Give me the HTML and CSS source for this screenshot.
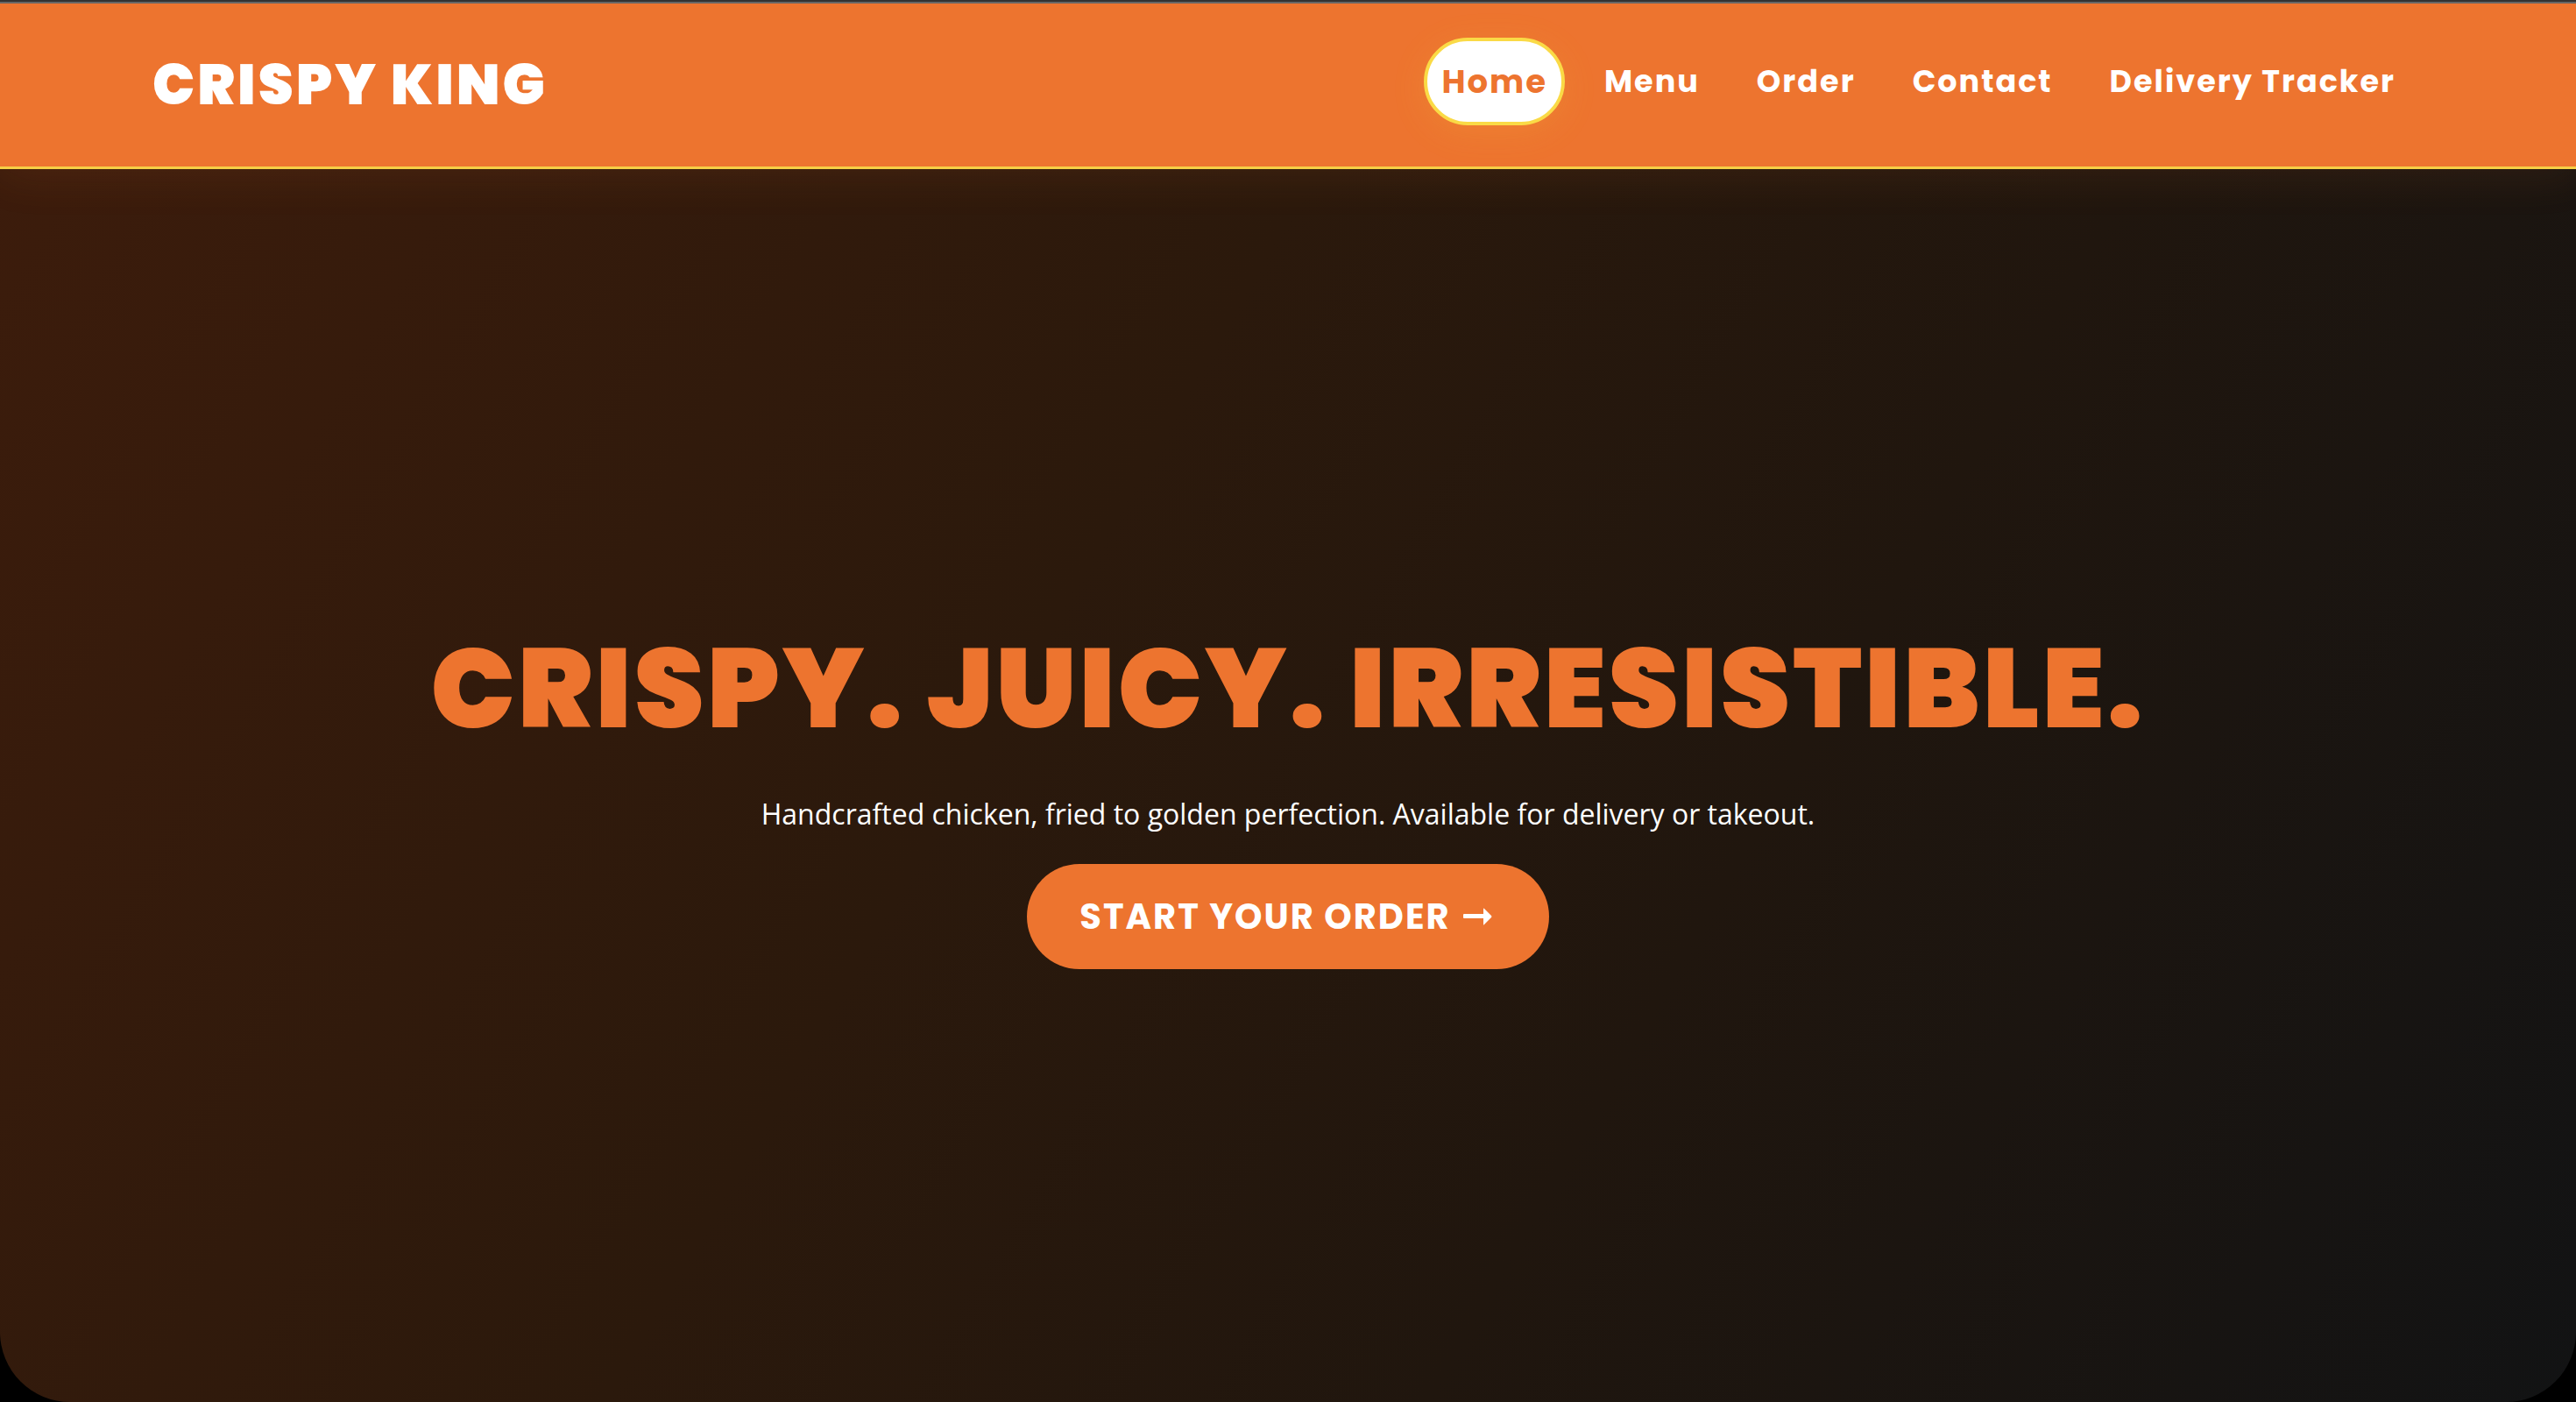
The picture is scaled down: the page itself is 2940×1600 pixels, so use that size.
FILE: index.html
```html
<!DOCTYPE html>
<html lang="en">
<head>
<meta charset="utf-8">
<meta name="viewport" content="width=device-width, initial-scale=1">
<title>Crispy King</title>
<link rel="stylesheet" href="styles.css">
</head>
<body>
<header class="site-header">
  <a class="logo" href="#">CRISPY KING</a>
  <nav class="nav" aria-label="Main">
    <a class="nav-link active" href="#" aria-current="page">Home</a>
    <a class="nav-link" href="#menu">Menu</a>
    <a class="nav-link" href="#order">Order</a>
    <a class="nav-link" href="#contact">Contact</a>
    <a class="nav-link" href="#tracker">Delivery Tracker</a>
  </nav>
</header>
<main class="hero">
  <h1 class="hero-title">CRISPY. JUICY. IRRESISTIBLE.</h1>
  <p class="hero-text">Handcrafted chicken, fried to golden perfection. Available for delivery or takeout.</p>
  <a class="cta" href="#order">START YOUR ORDER
    <svg class="cta-arrow" viewBox="0 0 38 20" aria-hidden="true"><path d="M1 7h22V1q0-1 1 0l8 8q1 1 0 2l-8 8q-1 1-1 0v-7H1q-1 0-1-1V8q0-1 1-1z" fill="currentColor"/></svg>
  </a>
</main>
</body>
</html>
```

FILE: styles.css
```css
* {
  box-sizing: border-box;
}

body {
  margin: 0;
  min-height: 100vh;
  display: flex;
  flex-direction: column;
  background: #000;
  color: #fff;
  font-family: "Open Sans", sans-serif;
}

a {
  color: inherit;
  text-decoration: none;
}

.site-header {
  position: relative;
  display: flex;
  align-items: center;
  justify-content: space-between;
  padding: 45px 186px 43px 174px;
  background: #ed742f;
  border-top: 2px solid #333;
  border-bottom: 3px solid #f6cf46;
  box-shadow: inset 0 2px #666, 0 8px 48px rgba(238, 117, 48, 0.1);
  font-family: Poppins, Inter, sans-serif;
}

.logo {
  font-size: 64px;
  font-weight: 900;
  line-height: 96px;
  letter-spacing: 3px;
}

.nav {
  display: flex;
  gap: 25px;
  margin: -4px 0;
  padding-bottom: 8px;
}

.nav-link {
  padding: 20px 16px;
  border: 4px solid transparent;
  border-radius: 50px;
  font-size: 35px;
  font-weight: 700;
  line-height: 52px;
  letter-spacing: 2px;
}

.active {
  background: #fff;
  border-color: #fada46;
  color: #ed742f;
  font-size: 37px;
  box-shadow: 0 8px 40px rgba(250, 218, 70, 0.12);
}

.hero {
  flex: 1;
  display: flex;
  flex-direction: column;
  align-items: center;
  justify-content: center;
  padding-bottom: 2px;
  border-radius: 0 0 80px 80px;
  background: linear-gradient(120deg, #3c1c0c 0%, #2b190c 40%, #20160e 65%, #121314 100%);
  text-align: center;
}

.hero-title {
  margin: 0;
  color: #ed742f;
  font-family: Poppins, Inter, sans-serif;
  font-size: 128px;
  font-weight: 900;
  line-height: 200px;
  letter-spacing: 3px;
}

.hero-text {
  margin: 16px 0 30px;
  font-size: 32px;
  line-height: 54px;
}

.cta {
  display: flex;
  align-items: center;
  gap: 14px;
  padding: 30px 60px;
  border-radius: 60px;
  background: #ed742f;
  font-family: Poppins, Inter, sans-serif;
  font-size: 40px;
  font-weight: 700;
  line-height: 60px;
  letter-spacing: 2px;
}

.cta-arrow {
  width: 38px;
  height: 20px;
}
```
